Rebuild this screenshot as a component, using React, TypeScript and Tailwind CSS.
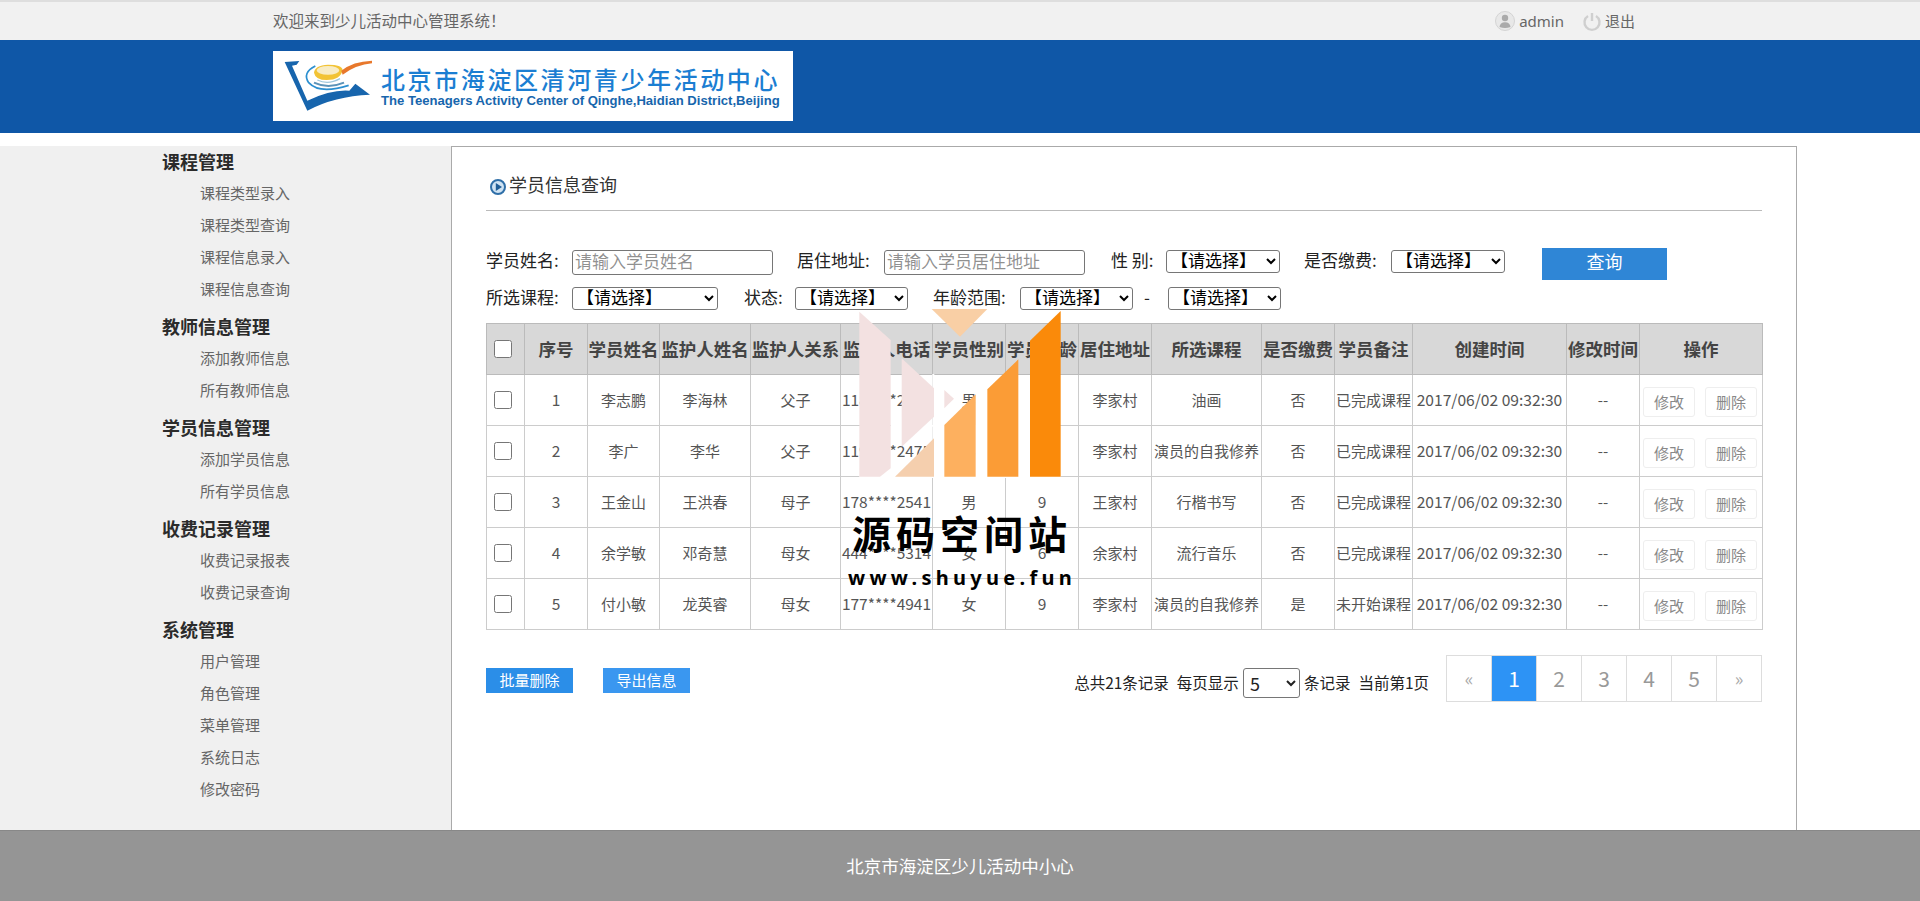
import React from 'react';

const groups = [
  { title: '课程管理', items: ['课程类型录入', '课程类型查询', '课程信息录入', '课程信息查询'] },
  { title: '教师信息管理', items: ['添加教师信息', '所有教师信息'] },
  { title: '学员信息管理', items: ['添加学员信息', '所有学员信息'] },
  { title: '收费记录管理', items: ['收费记录报表', '收费记录查询'] },
  { title: '系统管理', items: ['用户管理', '角色管理', '菜单管理', '系统日志', '修改密码'] },
];

const headers = ['序号', '学员姓名', '监护人姓名', '监护人关系', '监护人电话', '学员性别', '学员年龄', '居住地址', '所选课程', '是否缴费', '学员备注', '创建时间', '修改时间', '操作'];
const widths = [38, 63, 72, 91, 90, 92, 73, 73, 73, 110, 73, 78, 154, 73, 123];

const rows = [
  ['1', '李志鹏', '李海林', '父子', '118****2475', '男', '9', '李家村', '油画', '否', '已完成课程'],
  ['2', '李广', '李华', '父子', '119****2475', '男', '8', '李家村', '演员的自我修养', '否', '已完成课程'],
  ['3', '王金山', '王洪春', '母子', '178****2541', '男', '9', '王家村', '行楷书写', '否', '已完成课程'],
  ['4', '余学敏', '邓奇慧', '母女', '444****5314', '女', '6', '余家村', '流行音乐', '否', '已完成课程'],
  ['5', '付小敏', '龙英睿', '母女', '177****4941', '女', '9', '李家村', '演员的自我修养', '是', '未开始课程'],
];

function Choose({ className }: { className: string }) {
  return (
    <select className={`border border-[#767676] rounded-[3px] bg-white text-black text-[17px] font-['Liberation_Sans','Noto_Sans_CJK_SC',sans-serif] ${className}`}>
      <option>【请选择】</option>
    </select>
  );
}

function LogoMark() {
  return (
    <svg width="110" height="65" viewBox="0 0 330 195" className="shrink-0">
      <path d="M20 30 L64 27 L56 38 L42 41 L88 146 Q160 112 214 116 L232 95 L276 128 Q170 132 88 176 Z" fill="#1765ad" />
      <path d="M112 42 Q72 62 92 92 Q125 128 212 100" fill="none" stroke="#2b8fd0" strokeWidth="5" />
      <path d="M108 92 Q150 112 198 92" fill="none" stroke="#5c93b8" strokeWidth="6" />
      <path d="M118 84 Q150 100 186 80" fill="none" stroke="#9fc7dc" strokeWidth="4" />
      <path d="M108 62 Q110 40 150 38 Q192 38 194 54 Q188 84 146 84 Q112 84 108 62 Z" fill="#f2c335" />
      <ellipse cx="150" cy="55" rx="34" ry="13" fill="#f8ecc4" />
      <path d="M190 56 Q225 28 282 26 L282 34 Q235 38 194 68 Z" fill="#e8782c" />
    </svg>
  );
}

export default function App() {
  return (
    <div className="relative w-[1920px] h-[901px] overflow-hidden bg-white font-['Noto_Sans_CJK_SC','Noto_Sans',sans-serif]">
      <header className="flex items-center h-[40px] pl-[273px] pr-[285px] bg-[#f1f1f1] border-t-2 border-[#dedede] text-[15px] text-[#666]">
        <span className="text-[15.5px]">欢迎来到少儿活动中心管理系统！</span>
        <div className="ml-auto flex items-center">
          <svg width="22" height="22" viewBox="0 0 22 22" className="mr-[3px]">
            <circle cx="11" cy="11" r="9.5" fill="#e8e8e8" stroke="#d4d4d4" />
            <circle cx="11" cy="8" r="3.2" fill="#aaa" />
            <path d="M5.5 17 Q6 12.2 11 12.2 Q16 12.2 16.5 17 Q11 19 5.5 17 Z" fill="#aaa" />
          </svg>
          <span className="font-['Noto_Sans',sans-serif]">admin</span>
          <svg width="20" height="22" viewBox="0 0 20 22" className="ml-[18px] mr-[3px]">
            <path d="M6 6 A7.5 7.5 0 1 0 14 6" fill="none" stroke="#cfcfcf" strokeWidth="2.4" />
            <path d="M10 3 V11" stroke="#cfcfcf" strokeWidth="2.4" />
          </svg>
          <span>退出</span>
        </div>
      </header>

      <div className="h-[93px] pl-[273px] pt-[11px] bg-[#0f57a7]">
        <div className="flex w-[520px] h-[70px] bg-white pl-[5px]">
          <div className="pt-[1px]">
            <LogoMark />
          </div>
          <div className="ml-[-7px] pt-[14px] w-[405px]">
            <div className="text-[24px] leading-[28px] tracking-[2.6px] font-medium text-[#1b7ed2] whitespace-nowrap">北京市海淀区清河青少年活动中心</div>
            <div className="text-[13.1px] leading-[14px] mt-[1px] font-bold text-[#1766ad] whitespace-nowrap font-['Liberation_Sans',sans-serif]">The Teenagers Activity Center of Qinghe,Haidian District,Beijing</div>
          </div>
        </div>
      </div>

      <main className="flex h-[684px] mt-[13px]">
        <aside className="w-[451px] h-full bg-[#f0f0f0] pl-[162px] pt-[1px]">
          {groups.map((g) => (
            <div key={g.title} className="mb-[7px]">
              <div className="h-[30px] leading-[28px] text-[18px] font-bold text-[#2b2b2b]">{g.title}</div>
              {g.items.map((it) => (
                <div key={it} className="h-[32px] leading-[32px] pl-[38px] text-[15px] text-[#666]">{it}</div>
              ))}
            </div>
          ))}
        </aside>

        <section className="w-[1346px] h-full border border-b-0 border-[#aaa] pl-[34px]">
          <div className="flex items-center w-[1276px] h-[64px] pt-[11px] border-b border-[#bbb] text-[18px] text-[#333]">
            <svg width="18" height="18" viewBox="0 0 18 18" className="ml-[3px] mr-[2px] mt-[5px]">
              <circle cx="9" cy="9" r="7" fill="#cfe3f3" stroke="#2f6fa8" strokeWidth="2" />
              <path d="M6.8 5 L13 9 L6.8 13 Z" fill="#1f5d96" />
            </svg>
            <span>学员信息查询</span>
          </div>

          <div className="flex items-center h-[32px] mt-[36px] text-[17px] text-[#222]">
            <label className="w-[86px] mb-[7px]">学员姓名:</label>
            <input placeholder="请输入学员姓名" className="w-[201px] h-[25px] mb-[1px] px-[2px] border border-[#767676] rounded-[3px] text-[17px] font-['Liberation_Sans','Noto_Sans_CJK_SC',sans-serif]" />
            <label className="w-[87px] ml-[24px] mb-[7px]">居住地址:</label>
            <input placeholder="请输入学员居住地址" className="w-[201px] h-[25px] mb-[1px] px-[2px] border border-[#767676] rounded-[3px] text-[17px] font-['Liberation_Sans','Noto_Sans_CJK_SC',sans-serif]" />
            <label className="w-[55px] ml-[26px] mb-[7px]">性 别:</label>
            <Choose className="w-[114px] h-[23px] mb-[3px]" />
            <label className="w-[87px] ml-[24px] mb-[7px]">是否缴费:</label>
            <Choose className="w-[114px] h-[23px] mb-[3px]" />
            <button className="w-[125px] h-[32px] ml-[37px] mt-[2px] pb-[5px] bg-[#2f86d6] text-white text-[18px]">查询</button>
          </div>

          <div className="flex items-center h-[23px] mt-[8px] text-[17px] text-[#222]">
            <label className="w-[86px] mb-[4px]">所选课程:</label>
            <Choose className="w-[146px] h-[23px]" />
            <label className="w-[51px] ml-[26px] mb-[4px]">状态:</label>
            <Choose className="w-[113px] h-[23px]" />
            <label className="w-[87px] ml-[25px] mb-[4px]">年龄范围:</label>
            <Choose className="w-[113px] h-[23px]" />
            <span className="w-[35px] pl-[11px] mb-[4px]">-</span>
            <Choose className="w-[113px] h-[23px]" />
          </div>

          <table className="w-[1276px] mt-[13px] table-fixed border-collapse border border-[#ccc] text-[15px] text-[#555] text-center">
            <colgroup>
              {widths.map((w, i) => (
                <col key={i} style={{ width: w }} />
              ))}
            </colgroup>
            <thead>
              <tr className="h-[51px] bg-[#d8d8d8] text-[#444]">
                <th className="border border-[#bbb] p-0 font-normal">
                  <input type="checkbox" className="block w-[18px] h-[18px] ml-[7px]" />
                </th>
                {headers.map((h) => (
                  <th key={h} className="border border-[#bbb] p-0 text-[17.5px] font-bold whitespace-nowrap overflow-hidden">{h}</th>
                ))}
              </tr>
            </thead>
            <tbody>
              {rows.map((r) => (
                <tr key={r[0]} className="h-[51px]">
                  <td className="border border-[#ccc] p-0">
                    <input type="checkbox" className="block w-[18px] h-[18px] ml-[7px]" />
                  </td>
                  {r.map((c, i) => (
                    <td key={i} className={`border border-[#ccc] p-0 whitespace-nowrap overflow-hidden ${i === 0 || i === 4 || i === 6 ? 'text-[15.5px]' : ''}`}>{c}</td>
                  ))}
                  <td className="border border-[#ccc] p-0 whitespace-nowrap text-[15.6px]">2017/06/02 09:32:30</td>
                  <td className="border border-[#ccc] p-0">--</td>
                  <td className="border border-[#ccc] p-0">
                    <div className="flex gap-[10px] pl-[3px] mt-[4px] text-[#888]">
                      <button className="w-[52px] h-[30px] border border-[#eee] rounded-[3px]">修改</button>
                      <button className="w-[52px] h-[30px] border border-[#eee] rounded-[3px]">删除</button>
                    </div>
                  </td>
                </tr>
              ))}
            </tbody>
          </table>

          <div className="flex items-start w-[1276px] mt-[25px]">
            <button className="w-[87px] h-[25px] mt-[13px] bg-[#2b8ee8] text-white text-[15px]">批量删除</button>
            <button className="w-[87px] h-[25px] mt-[13px] ml-[30px] bg-[#3a97f0] text-white text-[15px]">导出信息</button>
            <div className="ml-auto flex items-center h-[30px] mt-[13px] mr-[17px] text-[15.5px] text-[#222] whitespace-nowrap">
              <span>总共21条记录</span>
              <span className="ml-[8px]">每页显示</span>
              <select className="w-[57px] h-[30px] mx-[4px] px-[2px] border border-[#767676] rounded-[3px] bg-white text-[18px]">
                <option>5</option>
              </select>
              <span>条记录</span>
              <span className="ml-[8px]">当前第1页</span>
            </div>
            <ul className="flex w-[316px] h-[47px] border border-[#ddd] text-[21px] text-[#999]">
              {['«', '1', '2', '3', '4', '5', '»'].map((p) => (
                <li key={p} className={`flex-1 flex items-center justify-center border-r border-[#ddd] last:border-r-0 ${p === '1' ? 'bg-[#2d93f5] text-white' : ''} ${p === '«' || p === '»' ? 'text-[18px] text-[#aaa]' : ''}`}>{p}</li>
              ))}
            </ul>
          </div>
        </section>
      </main>

      <footer className="flex items-center justify-center h-[71px] bg-[#959595] border-t border-[#888] text-[17.5px] text-white">北京市海淀区少儿活动中小心</footer>

      <div className="absolute left-[830px] top-[300px] w-[270px] h-[300px] pointer-events-none">
        <svg width="270" height="300" viewBox="0 0 810 900" className="absolute left-0 top-0">
          <rect x="182" y="375" width="418" height="5" fill="#fff" />
          <rect x="88" y="526" width="604" height="8" fill="#fff" />
          <rect x="307" y="222" width="6" height="308" fill="#fff" />
          <polygon points="88,35 182,120 182,505 150,530 88,530" fill="#f3e1e1" />
          <polygon points="215,175 312,265 312,350 215,440" fill="#f3e1e1" />
          <polygon points="343,270 372,296 343,325" fill="#f3e1e1" />
          <polygon points="305,27 472,27 390,110" fill="#f9cfa5" />
          <polygon points="195,530 312,415 312,530" fill="#f5cfae" />
          <polygon points="343,375 437,283 437,530 343,530" fill="#fdb05f" />
          <polygon points="472,268 565,178 565,530 472,530" fill="#fb9c36" />
          <polygon points="600,122 692,33 692,530 600,530" fill="#fa8a0a" />
        </svg>
        <div className="absolute left-[22px] top-[208px] text-[39px] leading-[48px] font-bold tracking-[5px] text-black whitespace-nowrap">源码空间站</div>
        <div className="absolute left-[18px] top-[264px] text-[20px] leading-[28px] font-bold tracking-[4.3px] text-black whitespace-nowrap font-['Noto_Sans',sans-serif]">www.shuyue.fun</div>
      </div>
    </div>
  );
}
